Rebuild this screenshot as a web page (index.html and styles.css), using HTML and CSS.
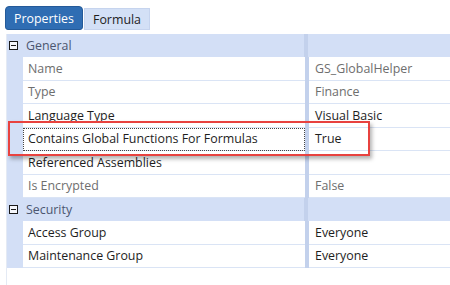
FILE: index.html
```html
<!DOCTYPE html>
<html>
<head>
<meta charset="utf-8">
<link rel="stylesheet" href="styles.css">
</head>
<body>
<div class="page">
  <div class="tabs">
    <div class="tab active">Properties</div>
    <div class="tab">Formula</div>
  </div>
  <div class="grid">
    <div class="cat">
      <span class="toggle"></span><span class="cat-label">General</span><span class="cat-div"></span><span class="cat-rest"></span>
    </div>
    <div class="row"><span class="gut"></span><span class="name ro">Name</span><span class="div"></span><span class="val ro">GS_GlobalHelper</span></div>
    <div class="row"><span class="gut"></span><span class="name ro">Type</span><span class="div"></span><span class="val ro">Finance</span></div>
    <div class="row"><span class="gut"></span><span class="name">Language Type</span><span class="div"></span><span class="val">Visual Basic</span></div>
    <div class="row"><span class="gut"></span><span class="name focus">Contains Global Functions For Formulas</span><span class="div"></span><span class="val">True</span></div>
    <div class="row"><span class="gut"></span><span class="name">Referenced Assemblies</span><span class="div"></span><span class="val"></span></div>
    <div class="row"><span class="gut"></span><span class="name ro">Is Encrypted</span><span class="div"></span><span class="val ro">False</span></div>
    <div class="cat">
      <span class="toggle"></span><span class="cat-label">Security</span><span class="cat-div"></span><span class="cat-rest"></span>
    </div>
    <div class="row"><span class="gut"></span><span class="name">Access Group</span><span class="div"></span><span class="val">Everyone</span></div>
    <div class="row"><span class="gut"></span><span class="name">Maintenance Group</span><span class="div"></span><span class="val">Everyone</span></div>
    <div class="filler"></div>
  </div>
  <div class="highlight"></div>
</div>
</body>
</html>
```

FILE: styles.css
```css
* { box-sizing: border-box; }
html, body { margin: 0; padding: 0; background: #fff; }
body {
  font-family: "Open Sans", "Noto Sans", sans-serif;
  font-size: 12.4px;
  color: #1e1e1e;
  width: 450px;
  height: 285px;
  overflow: hidden;
}
.page { position: relative; height: 285px; }
.tabs {
  display: flex;
  align-items: flex-end;
  padding: 6px 0 0 5px;
  height: 30px;
}
.tab {
  height: 22px;
  padding: 0 8px;
  display: flex;
  align-items: center;
  background: #d3e0f6;
  color: #1e1e1e;
  font-size: 12.4px;
  border: 1px solid #c6d4ee;
  margin-left: 1px;
  width: 66px;
  justify-content: center;
}
.tab.active {
  height: 24px;
  width: 78px;
  margin-left: 0;
  background: #2f6db3;
  border: 1px solid #245a99;
  border-radius: 4px 4px 3px 3px;
  color: #fff;
}
.grid {
  margin: 4px 0 0 6px;
  display: flex;
  flex-direction: column;
  border-left: 1px solid #e4eaf4;
  height: 251px;
}
.cat {
  display: flex;
  height: 23px;
  background: #d3dff6;
  align-items: center;
}
.toggle {
  width: 9px;
  height: 9px;
  border: 1px solid #1a1a1a;
  margin: 0 4px 0 2px;
  position: relative;
  background: #f4f6fb;
}
.toggle::after {
  content: "";
  position: absolute;
  left: 1px;
  right: 1px;
  top: 3px;
  height: 1px;
  background: #1a1a1a;
}
.cat-label {
  width: 283px;
  color: #4b5670;
  padding-left: 5px;
  margin-left: -1px;
}
.cat-div {
  width: 4px;
  align-self: stretch;
  background: #c3d1ec;
}
.cat-rest { flex: 1; }
.row {
  display: flex;
  height: 23.5px;
}
.gut {
  width: 16px;
  background: #d3dff6;
  flex: none;
}
.name {
  width: 282px;
  flex: none;
  padding-left: 5px;
  display: flex;
  align-items: center;
  border-bottom: 1px solid #dae4f5;
  white-space: nowrap;
}
.div {
  width: 4px;
  flex: none;
  background: #c3d1ec;
}
.val {
  flex: 1;
  padding-left: 6px;
  display: flex;
  align-items: center;
  border-bottom: 1px solid #dae4f5;
}
.ro { color: #6e6e6e; }
.focus {
  outline: 1px dotted #444;
  outline-offset: -1px;
}
.filler {
  flex: 1;
  background: #fff;
}
.highlight {
  position: absolute;
  left: 8px;
  top: 121px;
  width: 362px;
  height: 35px;
  border: 2px solid #e8423f;
  box-shadow: 2px 3px 4px rgba(0,0,0,0.3);
}
```
